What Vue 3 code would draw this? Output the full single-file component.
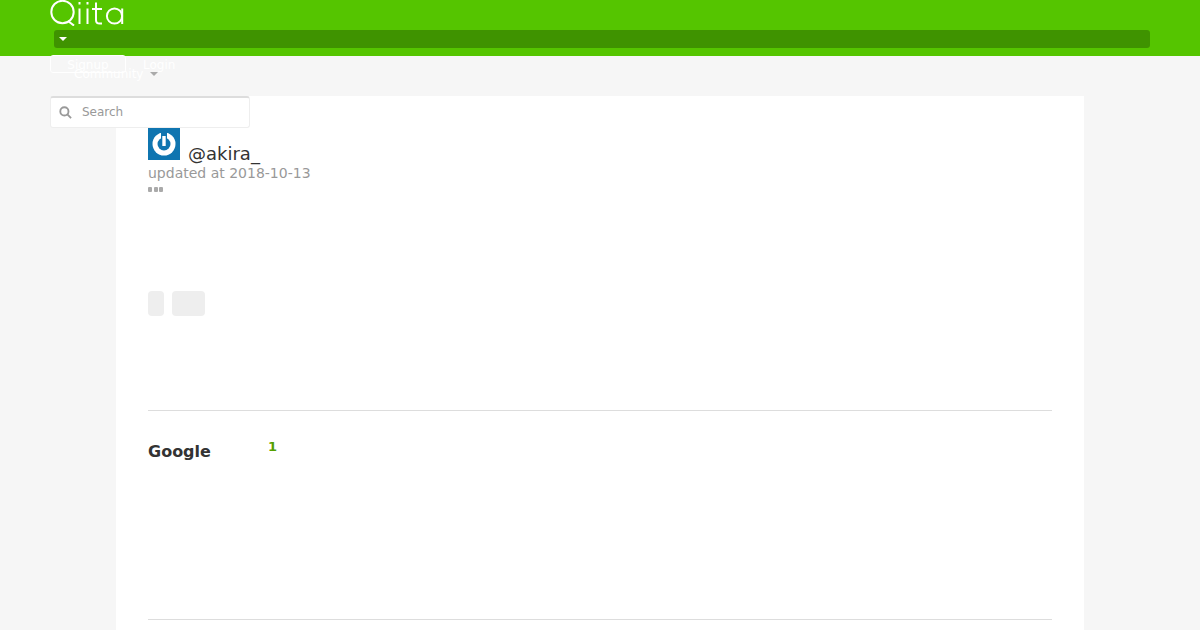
<template>
  <div class="page">
    <header class="head">
      <svg class="logo" width="76" height="26" viewBox="0 0 76 26" fill="none" stroke="#fff" stroke-width="2" aria-label="Qiita">
        <circle cx="12.5" cy="12" r="11.2" />
        <path d="M18 21l6 4.6" />
        <path d="M29.5 8.5V24M29.5 2v2.5M37.5 8.5V24M37.5 2v2.5" />
        <path d="M46 2.5V20q0 3.6 3.6 3.6H52M42 9h10" />
        <circle cx="64.5" cy="16" r="7.6" />
        <path d="M72.2 8.5V24" />
      </svg>
      <div class="bar"><span class="caret white"></span></div>

      <div class="nav">
        <a class="signup">Signup</a>
        <a class="login">Login</a>
        <span class="community">Community</span>
        <span class="caret gray"></span>
      </div>
      <div class="search">
        <svg width="13" height="13" viewBox="0 0 14 14" fill="none" stroke="#999" stroke-width="2">
          <circle cx="5.8" cy="5.8" r="4.4" />
          <path d="M9 9l4 4" />
        </svg>
        <span>Search</span>
      </div>
    </header>

    <main class="card">
      <div class="user">
        <svg class="avatar" width="32" height="32" viewBox="0 0 32 32">
          <rect width="32" height="32" fill="#0f75b0" />
          <circle cx="16" cy="16" r="11.5" fill="#fff" />
          <circle cx="16" cy="16" r="6.5" fill="#0f75b0" />
          <rect x="13" y="3" width="6" height="12" fill="#0f75b0" />
          <rect x="14.3" y="8" width="3.4" height="10" fill="#fff" />
        </svg>
        <span class="name">@akira_</span>
      </div>
      <div class="updated">updated at 2018-10-13</div>
      <div class="dots"><i></i><i></i><i></i></div>

      <div class="tags">
        <span class="tag small"></span>
        <span class="tag wide"></span>
      </div>

      <section class="item">
        <div class="row">
          <h2>Google</h2>
          <span class="count">1</span>
        </div>
      </section>
      <div class="rule"></div>
    </main>
  </div>
</template>

<script setup>
</script>

<style>
html, body {
  margin: 0;
  background: #f6f6f6;
  overflow: hidden;
}
</style>

<style scoped>
.page {
  height: 630px;
  font-family: "DejaVu Sans", sans-serif;
  background: #f6f6f6;
  overflow: hidden;
}
.head {
  position: relative;
  height: 56px;
  background: #55c500;
  padding: 0 50px;
  box-sizing: border-box;
}
.logo {
  display: block;
  height: 26px;
}
.bar {
  display: flex;
  align-items: center;
  height: 18px;
  margin: 4px 0 0 4px;
  width: 1096px;
  padding-left: 5px;
  box-sizing: border-box;
  background: rgba(0, 0, 0, 0.25);
  border-radius: 3px;
}
.caret {
  display: inline-block;
  width: 0;
  height: 0;
  border-left: 4px solid transparent;
  border-right: 4px solid transparent;
}
.caret.white {
  border-top: 4px solid #fff;
}
.caret.gray {
  position: absolute;
  left: 100px;
  top: 17px;
  border-top: 4px solid #aaa;
}
.nav {
  position: absolute;
  left: 50px;
  top: 55px;
  width: 200px;
  height: 30px;
  font-size: 12px;
  color: #fff;
  z-index: 2;
}
.signup {
  position: absolute;
  left: 0;
  top: 0;
  width: 76px;
  height: 18px;
  line-height: 18px;
  text-align: center;
  box-sizing: border-box;
  border: 1px solid #fff;
  border-radius: 3px;
}
.login {
  position: absolute;
  left: 93px;
  top: 2px;
  line-height: 16px;
}
.community {
  position: absolute;
  left: 24px;
  top: 11px;
  line-height: 16px;
}
.search {
  position: absolute;
  left: 50px;
  top: 96px;
  width: 200px;
  height: 32px;
  display: flex;
  align-items: center;
  gap: 10px;
  padding: 0 0 1px 8px;
  box-sizing: border-box;
  background: #fff;
  border: 1px solid #eee;
  border-top: 2px solid #ddd;
  border-radius: 3px;
  font-size: 12px;
  color: #999;
  z-index: 2;
}
.card {
  width: 968px;
  margin: 40px 0 0 116px;
  padding: 32px;
  box-sizing: border-box;
  height: 534px;
  background: #fff;
}
.user {
  display: flex;
  align-items: flex-end;
  height: 32px;
}
.avatar {
  display: block;
}
.name {
  margin-left: 8px;
  font-size: 18px;
  line-height: 22px;
  margin-bottom: -5px;
  color: #333;
}
.updated {
  margin-top: 4px;
  font-size: 14px;
  line-height: 18px;
  color: #999;
}
.dots {
  display: flex;
  gap: 1.5px;
  margin-top: 5px;
  height: 5px;
}
.dots i {
  width: 4px;
  height: 5px;
  border-radius: 1px;
  background: #aaa;
}
.tags {
  display: flex;
  gap: 8px;
  margin-top: 99px;
  height: 25px;
}
.tag {
  background: #eee;
  border-radius: 4px;
}
.tag.small {
  width: 16px;
}
.tag.wide {
  width: 33px;
}
.item {
  margin-top: 94px;
  height: 208px;
  border-top: 1px solid #ddd;
  box-sizing: border-box;
  padding-top: 31px;
}
.row {
  display: flex;
  align-items: flex-start;
}
h2 {
  margin: 0;
  width: 120px;
  font-size: 16px;
  line-height: 20px;
  font-weight: 700;
  color: #333;
}
.count {
  font-size: 13px;
  line-height: 10px;
  font-weight: 700;
  color: #55a000;
}
.rule {
  height: 1px;
  background: #ddd;
  margin-top: 1px;
}
</style>
